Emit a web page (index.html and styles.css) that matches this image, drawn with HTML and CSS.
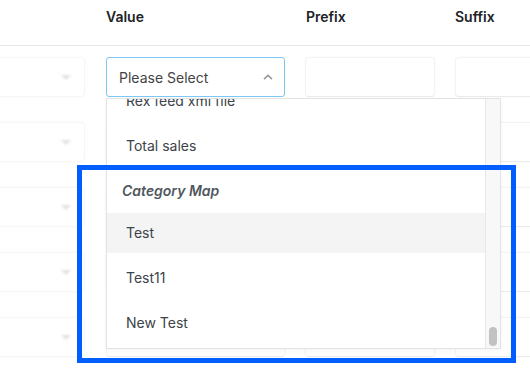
FILE: index.html
```html
<!DOCTYPE html>
<html lang="en">
<head>
  <meta charset="UTF-8">
  <meta name="viewport" content="width=device-width, initial-scale=1.0">
  <title>Feed Attributes</title>
  <link rel="stylesheet" href="styles.css">
</head>
<body>
  <div class="mapping">
    <div class="head-row">
      <div class="col col-attr"></div>
      <div class="col col-value">Value</div>
      <div class="col col-prefix">Prefix</div>
      <div class="col col-suffix">Suffix</div>
    </div>

    <div class="rows">
      <div class="row">
        <div class="col col-attr"><div class="ghost-select"><span class="ghost-arrow"></span></div></div>
        <div class="col col-value">
          <div class="select open">
            <span>Please Select</span>
            <svg class="chevron" width="10" height="6" viewBox="0 0 10 6"><path d="M1 5.2L5 1.4L9 5.2" fill="none" stroke="#9a9a9a" stroke-width="1.6"/></svg>
          </div>

          <div class="dropdown">
            <div class="options">
              <div class="option first">Rex feed xml file</div>
              <div class="option">Total sales</div>
              <div class="group">Category Map</div>
              <div class="option active">Test</div>
              <div class="option">Test11</div>
              <div class="option">New Test</div>
            </div>
            <div class="scrollbar"><div class="thumb"></div></div>
          </div>
        </div>
        <div class="col col-prefix"><div class="ghost-input"></div></div>
        <div class="col col-suffix"><div class="ghost-input"></div></div>
      </div>

      <div class="row">
        <div class="col col-attr"><div class="ghost-select"><span class="ghost-arrow"></span></div></div>
        <div class="col col-value"><div class="ghost-input"></div></div>
        <div class="col col-prefix"><div class="ghost-input"></div></div>
        <div class="col col-suffix"><div class="ghost-input"></div></div>
      </div>

      <div class="row">
        <div class="col col-attr"><div class="ghost-select"><span class="ghost-arrow"></span></div></div>
        <div class="col col-value"><div class="ghost-input"></div></div>
        <div class="col col-prefix"><div class="ghost-input"></div></div>
        <div class="col col-suffix"><div class="ghost-input"></div></div>
      </div>

      <div class="row">
        <div class="col col-attr"><div class="ghost-select"><span class="ghost-arrow"></span></div></div>
        <div class="col col-value"><div class="ghost-input"></div></div>
        <div class="col col-prefix"><div class="ghost-input"></div></div>
        <div class="col col-suffix"><div class="ghost-input"></div></div>
      </div>

      <div class="row">
        <div class="col col-attr"><div class="ghost-select"><span class="ghost-arrow"></span></div></div>
        <div class="col col-value"><div class="ghost-input"></div></div>
        <div class="col col-prefix"><div class="ghost-input"></div></div>
        <div class="col col-suffix"><div class="ghost-input"></div></div>
      </div>
    </div>
  </div>

  <div class="callout"></div>
</body>
</html>
```

FILE: styles.css
```css
:root {
  --text: #3c434a;
  --heading: #1d2327;
  --ghost: #f3f3f3;
  --focus: #7cc8f2;
  --callout: #005eff;
}

* {
  box-sizing: border-box;
  margin: 0;
  padding: 0;
}

body {
  font-family: 'Inter', 'Roboto', sans-serif;
  font-size: 14px;
  color: var(--text);
  background: #fff;
  width: 530px;
  height: 368px;
  overflow: hidden;
  position: relative;
}

.mapping {
  margin-left: -20px;
  width: 620px;
}

.head-row,
.row {
  display: grid;
  grid-template-columns: 105px 180px 130px 130px;
  column-gap: 20px;
}

.head-row {
  height: 46px;
  border-bottom: 1px solid #e6e6e6;
  padding-top: 8px;
  font-weight: 600;
  color: var(--heading);
  font-size: 14px;
}

.head-row .col-value { padding-left: 1px; }
.head-row .col-prefix { padding-left: 1px; }

.rows {
  display: flex;
  flex-direction: column;
  gap: 25px;
  padding-top: 11px;
}

.row .col-value { margin-left: 1px; position: relative; }

.ghost-select,
.ghost-input {
  height: 40px;
  border: 1px solid var(--ghost);
  border-bottom-color: #eaeaea;
  border-radius: 4px;
  box-shadow: 0 0 3px rgba(0, 0, 0, 0.03);
  position: relative;
}

.ghost-select {
  border-color: #f6f6f6;
  display: flex;
  align-items: center;
  justify-content: flex-end;
  padding-right: 13px;
}

.ghost-arrow {
  width: 0;
  height: 0;
  border-left: 5px solid transparent;
  border-right: 5px solid transparent;
  border-top: 5px solid #e2e2e2;
  filter: blur(0.8px);
}

.select {
  height: 40px;
  border: 1px solid var(--focus);
  border-radius: 3px;
  display: flex;
  align-items: center;
  justify-content: space-between;
  padding: 0 11px 0 12px;
  color: #444;
  background: #fff;
}

.chevron { margin-top: -1px; }

.dropdown {
  position: absolute;
  top: 41px;
  left: 0;
  width: 395px;
  height: 251px;
  border: 1px solid #e3e3e3;
  background: #fff;
  display: flex;
  box-shadow: 0 2px 4px rgba(0, 0, 0, 0.04);
  z-index: 2;
}

.options {
  flex: 1;
  overflow: hidden;
  display: flex;
  flex-direction: column;
}

.option,
.group {
  height: 40px;
  line-height: 40px;
  margin-bottom: 5px;
  padding-left: 19px;
  flex-shrink: 0;
  white-space: nowrap;
}

.option.first { margin-top: -18px; }

.group {
  margin-bottom: 2px;
  padding-left: 15px;
  font-weight: 600;
  font-style: italic;
  color: #50575e;
}

.option.active { background: #f4f4f4; }

.scrollbar {
  width: 15px;
  background: #f8f8f8;
  border-left: 1px solid #e8e8e8;
  display: flex;
  flex-direction: column;
  justify-content: flex-end;
  align-items: center;
  padding-bottom: 2px;
}

.thumb {
  width: 8px;
  height: 19px;
  border-radius: 4px;
  background: #c2c2c2;
}

.callout {
  position: absolute;
  left: 77px;
  top: 165px;
  width: 439px;
  height: 198px;
  border: 5px solid var(--callout);
  z-index: 5;
}
```
